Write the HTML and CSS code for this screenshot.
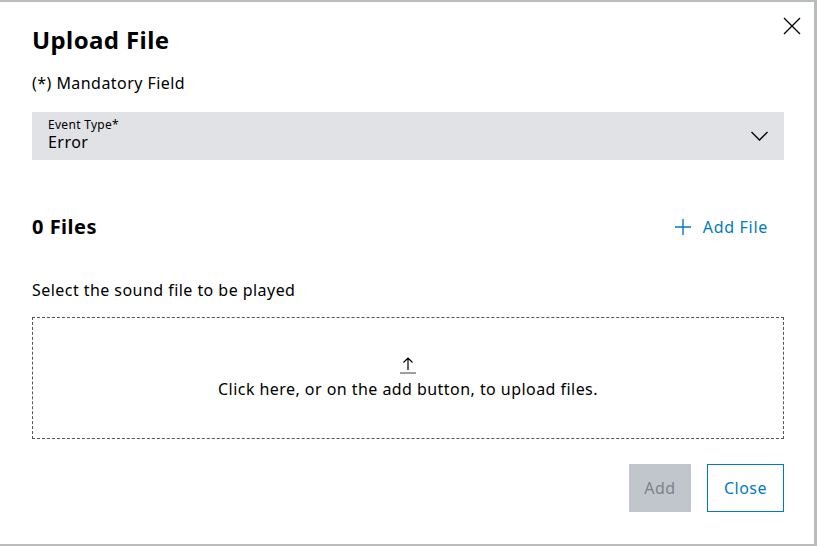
FILE: index.html
```html
<!DOCTYPE html>
<html>
<head>
<meta charset="utf-8">
<link rel="stylesheet" href="styles.css">
</head>
<body>
<div class="dialog">
  <button class="close-x" aria-label="Close">
    <svg width="18" height="18" viewBox="0 0 18 18"><path d="M1 1L17 17M17 1L1 17" stroke="#000" stroke-width="1.3" fill="none"/></svg>
  </button>
  <h1 class="title">Upload File</h1>
  <p class="mandatory">(*) Mandatory Field</p>
  <div class="select">
    <div class="select-text">
      <span class="select-label">Event Type*</span>
      <span class="select-value">Error</span>
    </div>
    <svg class="chevron" width="17" height="10" viewBox="0 0 17 10"><path d="M0.5 1L8.5 9L16.5 1" stroke="#000" stroke-width="1.3" fill="none"/></svg>
  </div>
  <div class="files-row">
    <h2 class="files-title">0 Files</h2>
    <button class="add-file">
      <svg width="16" height="16" viewBox="0 0 16 16"><path d="M8 0V16M0 8H16" stroke="#007bc0" stroke-width="1.4" fill="none"/></svg>
      <span>Add File</span>
    </button>
  </div>
  <p class="hint">Select the sound file to be played</p>
  <div class="dropzone">
    <svg class="upload-icon" width="16" height="18" viewBox="0 0 16 18"><path d="M8 14V2M3.5 6.5L8 2L12.5 6.5" stroke="#000" stroke-width="1.2" fill="none"/><path d="M0 17H16" stroke="#888" stroke-width="1.6"/></svg>
    <span class="drop-text">Click here, or on the add button, to upload files.</span>
  </div>
  <div class="actions">
    <button class="btn btn-disabled">Add</button>
    <button class="btn btn-outline">Close</button>
  </div>
</div>
</body>
</html>
```
FILE: styles.css
```css
* { box-sizing: border-box; }
html, body { margin: 0; padding: 0; }
body {
  background: #b9bcbd;
  width: 817px;
  height: 546px;
  overflow: hidden;
  font-family: "Noto Sans", "Open Sans", sans-serif;
  color: #000;
  padding-top: 2px;
  letter-spacing: 0.45px;
}
.dialog {
  position: relative;
  background: #fff;
  width: 814px;
  height: 542px;
  padding: 24px 30px 0 32px;
  display: flex;
  flex-direction: column;
}
.close-x {
  position: absolute;
  top: 15px;
  right: 13px;
  background: none;
  border: 0;
  padding: 0;
  width: 18px;
  height: 18px;
  line-height: 0;
}
.title {
  margin: 0;
  font-size: 24px;
  font-weight: 700;
  line-height: 28px;
  letter-spacing: 0.4px;
}
.mandatory {
  margin: 18px 0 0;
  font-size: 16px;
  line-height: 22px;
}
.select {
  margin-top: 18px;
  height: 48px;
  background: #e0e2e5;
  display: flex;
  align-items: center;
  justify-content: space-between;
  padding: 0 16px;
}
.select-text {
  display: flex;
  flex-direction: column;
  padding-bottom: 3px;
}
.select-label {
  font-size: 12px;
  line-height: 14px;
  letter-spacing: 0.3px;
}
.select-value {
  font-size: 16px;
  line-height: 20px;
}
.files-row {
  margin-top: 53px;
  display: flex;
  align-items: center;
  justify-content: space-between;
  height: 28px;
}
.files-title {
  margin: 0;
  font-size: 20px;
  font-weight: 700;
  line-height: 28px;
  letter-spacing: 0.5px;
}
.add-file {
  display: flex;
  align-items: center;
  gap: 12px;
  background: none;
  border: 0;
  padding: 0 16px 0 0;
  color: #007bc0;
  font-family: inherit;
  font-size: 16px;
  letter-spacing: 0.7px;
  line-height: 20px;
}
.hint {
  margin: 38px 0 0;
  font-size: 16px;
  line-height: 22px;
}
.dropzone {
  margin-top: 16px;
  height: 122px;
  border: 1px dashed #555;
  display: flex;
  flex-direction: column;
  align-items: center;
  padding-top: 38px;
}
.upload-icon { display: block; }
.drop-text {
  margin-top: 5px;
  font-size: 16px;
  line-height: 20px;
}
.actions {
  margin-top: 25px;
  display: flex;
  justify-content: flex-end;
  gap: 16px;
}
.btn {
  height: 48px;
  font-family: inherit;
  font-size: 16px;
  letter-spacing: 0.45px;
  padding: 0;
  background: #fff;
}
.btn-disabled {
  background: #c1c5cc;
  color: #7d8389;
  border: 0;
  width: 62px;
}
.btn-outline {
  border: 1px solid #007bc0;
  color: #007bc0;
  width: 77px;
}
```
